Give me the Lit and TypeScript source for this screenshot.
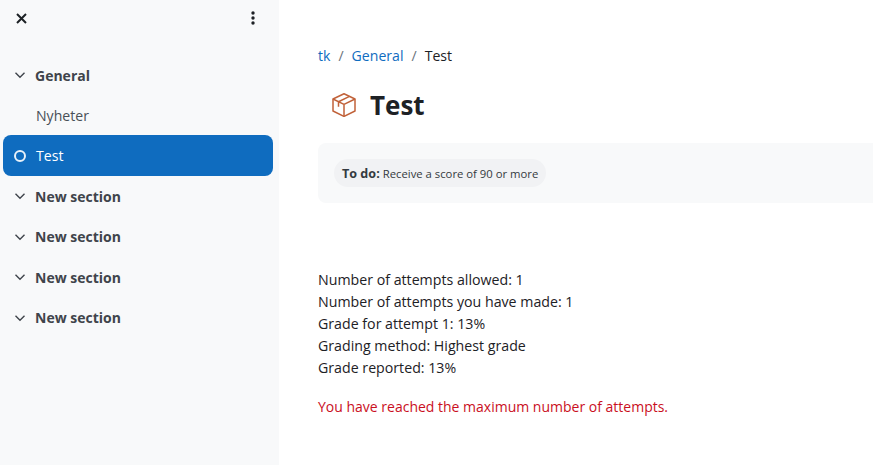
import { LitElement, html, css } from "lit";
import { customElement } from "lit/decorators.js";

const chevron = html`<svg class="chev" width="12" height="12" viewBox="0 0 12 12"><path d="M1.5 3.8 6 8.2l4.5-4.4" fill="none" stroke="#3f444b" stroke-width="1.4"/></svg>`;

@customElement("app-root")
export class AppRoot extends LitElement {
  static styles = css`
    :host { display: flex; width: 873px; height: 465px; overflow: hidden; background: #fff; font-family: "Open Sans", "Noto Sans", sans-serif; font-size: 14.2px; color: #1d2125; }
    .side { width: 279px; flex: none; background: #f8f9fa; box-sizing: border-box; }
    .top { height: 36px; display: flex; align-items: center; justify-content: space-between; padding: 0 24px 0 15px; }
    .nav { margin-top: 19px; padding: 0 6px 0 3px; display: flex; flex-direction: column; }
    .row { height: 40.5px; display: flex; align-items: center; gap: 9px; padding-left: 11px; color: #495057; font-size: 14.1px; }
    .sec { font-weight: 700; color: #3f444b; font-size: 14px; }
    .chev { flex: none; }
    .sub { padding-left: 33px; }
    .active { height: 41px; margin-top: -1px; background: #0f6cbf; color: #fff; border-radius: 8px; padding-left: 11px; gap: 10px; }
    .circle { width: 12px; height: 12px; box-sizing: border-box; border: 2px solid #e8f1f9; border-radius: 50%; flex: none; }
    .main { flex: 1; padding: 45px 0 0 39px; min-width: 0; }
    .crumbs { display: flex; gap: 8px; height: 20px; align-items: center; font-size: 14.1px; }
    .crumbs .link { color: #0f6cbf; }
    .crumbs .sep { color: #6a737b; }
    .title { display: flex; align-items: center; gap: 14px; margin: 20px 0 0 14px; height: 40px; }
    .title h1 { margin: 0; font-size: 26px; font-weight: 700; line-height: 40px; }
    .box { margin-top: 18px; height: 60px; background: #f8f9fa; border-radius: 8px 0 0 8px; display: flex; align-items: center; padding-left: 16px; }
    .pill { background: #f1f2f4; border-radius: 14px; height: 28px; display: flex; align-items: center; padding: 0 8px; gap: 3px; }
    .pill b { font-weight: 700; font-size: 12.6px; color: #343a40; }
    .pill span { font-size: 11.3px; color: #343a40; }
    .info { margin-top: 66px; line-height: 22px; }
    .err { margin-top: 17px; color: #ca0f1e; line-height: 22px; font-size: 14px; }
  `;
  render() {
    const sec = (t: string) => html`<div class="row sec">${chevron}<span>${t}</span></div>`;
    return html`
      <aside class="side">
        <div class="top">
          <svg width="13" height="13" viewBox="0 0 13 13"><path d="M2 2l9 9M11 2l-9 9" stroke="#1d2125" stroke-width="2" fill="none"/></svg>
          <svg width="4" height="14" viewBox="0 0 4 14"><circle cx="2" cy="2" r="1.7" fill="#1d2125"/><circle cx="2" cy="7" r="1.7" fill="#1d2125"/><circle cx="2" cy="12" r="1.7" fill="#1d2125"/></svg>
        </div>
        <nav class="nav">
          ${sec("General")}
          <div class="row sub">Nyheter</div>
          <div class="row active"><span class="circle"></span><span>Test</span></div>
          ${sec("New section")}${sec("New section")}${sec("New section")}${sec("New section")}
        </nav>
      </aside>
      <main class="main">
        <div class="crumbs"><span class="link">tk</span><span class="sep">/</span><span class="link">General</span><span class="sep">/</span><span>Test</span></div>
        <div class="title">
          <svg width="24" height="24" viewBox="0 0 24 24" fill="none" stroke="#c1623a" stroke-width="1.5" stroke-linejoin="round"><path d="M12 .8 23 6v12l-11 5.4L1 18V6z"/><path d="M1 6l11 5.4L23 6M12 11.4v12M17.5 3.4 6.5 8.7v5"/></svg>
          <h1>Test</h1>
        </div>
        <div class="box"><div class="pill"><b>To do:</b><span>Receive a score of 90 or more</span></div></div>
        <div class="info">
          <div>Number of attempts allowed: 1</div>
          <div>Number of attempts you have made: 1</div>
          <div>Grade for attempt 1: 13%</div>
          <div>Grading method: Highest grade</div>
          <div>Grade reported: 13%</div>
        </div>
        <div class="err">You have reached the maximum number of attempts.</div>
      </main>
    `;
  }
}
